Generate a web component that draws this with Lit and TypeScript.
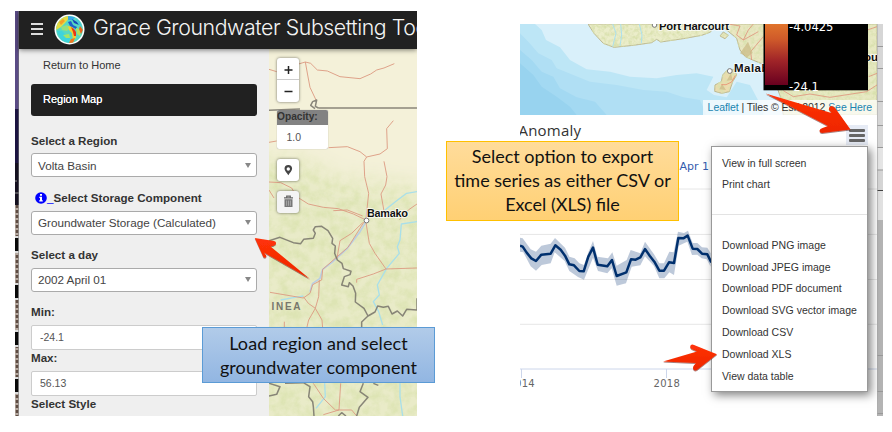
import { LitElement, html, svg, css } from "lit";
import { customElement, property } from "lit/decorators.js";

@customElement("grace-header")
class GraceHeader extends LitElement {
  static styles = css`
    :host { display: flex; align-items: center; height: 38px; background: #212121; color: #fff; overflow: hidden; position: relative; z-index: 2; box-shadow: 0 1px 5px rgba(0,0,0,.5); }
    .burger { flex: none; width: 12px; margin-left: 12px; display: grid; gap: 3px; margin-top: -2px; }
    .burger i { height: 2px; background: #ddd; }
    .logo { flex: none; width: 31px; height: 31px; margin-left: 11px; margin-top: -1px; }
    .title { font: 300 21.3px Inter, "Liberation Sans", sans-serif; white-space: nowrap; margin: -7px 0 0 8px; letter-spacing: -.42px; color: #f4f4f4; }
  `;
  render() {
    return html`
      <div class="burger"><i></i><i></i><i></i></div>
      <svg class="logo" viewBox="0 0 31 31">
        <defs>
          <clipPath id="disc"><circle cx="15.5" cy="15.5" r="13.4" /></clipPath>
          <filter id="soft"><feGaussianBlur stdDeviation=".6" /></filter>
        </defs>
        <circle cx="15.5" cy="15.5" r="15" fill="#fff" />
        <g clip-path="url(#disc)">
          <rect width="31" height="31" fill="#58d8c0" />
          <g filter="url(#soft)">
            <path d="M2 9L12 1L16 3L11 9L7 13L2 16Z" fill="#e2dc44" />
            <path d="M5 8L9 5L11 7L7 11Z" fill="#f5a028" />
            <path d="M14 2L21 3L19 6L14 6Z" fill="#38a8e8" />
            <path d="M14 8L17 7L19 11L23 13L22 15L16 12Z" fill="#1d60cc" />
            <path d="M18 5L23 8L25 11L20 9Z" fill="#1747b8" />
            <path d="M21 4L26 8L28 13L25 11Z" fill="#48c8d8" />
            <path d="M7 13L13 11L16 14L13 17L8 16Z" fill="#96e07c" />
            <path d="M14 12L18 13L21 17L22 24L19 26L18 19L15 16Z" fill="#f4d22c" />
            <path d="M17 13L20 15L22 18L22 22L20 22L19 18Z" fill="#e8341c" />
            <path d="M22 14L27 16L26 22L23 20Z" fill="#b8e05a" />
            <path d="M26 12L29 16L27 20L25 15Z" fill="#e8651e" />
            <path d="M3 17L8 17L12 21L16 24L15 29L7 26Z" fill="#3cd4dc" />
            <path d="M9 21L15 20L16 24L12 24Z" fill="#a4e468" />
            <path d="M17 25L21 24L19 29L15 29Z" fill="#ee7a24" />
          </g>
        </g>
      </svg>
      <div class="title">Grace Groundwater Subsetting Tool</div>
    `;
  }
}

@customElement("grace-sidebar")
class GraceSidebar extends LitElement {
  static styles = css`
    :host { display: flex; flex-direction: column; width: 226px; padding: 0 12px; background: #efefef; color: #333; font: 11px "Liberation Sans", Arial, sans-serif; overflow: hidden; flex: none; white-space: nowrap; }
    .nav { height: 32px; line-height: 32px; padding-left: 12px; flex: none; margin-bottom: 3px; }
    .active { background: #212121; color: #fff; border-radius: 3px; margin-bottom: 13px; line-height: 31px; text-shadow: 0 0 .6px #fff; }
    .label { flex: none; height: 24px; line-height: 21px; font-weight: bold; font-size: 11.6px; }
    .label.lead { line-height: 23px; }
    .label.tight { height: 21px; line-height: 15px; }
    .select { flex: none; box-sizing: border-box; height: 24px; border: 1px solid #aaa; border-radius: 3px; background: #fff; display: flex; align-items: center; justify-content: space-between; padding: 0 5px 0 6px; font-size: 11.7px; color: #444; margin-bottom: 9px; }
    .select.first { margin-bottom: 9.5px; padding-top: 1px; }
    .caret { border: 3px solid transparent; border-top: 5px solid #888; border-bottom: 0; }
    .input { flex: none; box-sizing: border-box; height: 25px; border: 1px solid #ccc; border-radius: 2px; background: #fff; line-height: 22px; padding-left: 8px; font-size: 10.5px; color: #555; }
    .info { display: inline-flex; width: 12px; height: 12px; margin-left: 4px; vertical-align: -2px; }
    .us { color: #00f; font-weight: normal; }
  `;
  render() {
    return html`
      <div class="nav">Return to Home</div>
      <div class="nav active">Region Map</div>
      <div class="label lead">Select a Region</div>
      <div class="select first">Volta Basin<span class="caret"></span></div>
      <div class="label"><svg class="info" viewBox="0 0 12 12"><circle cx="6" cy="6" r="5.8" fill="#0000fe" /><path d="M5 2H7V3.8H5ZM4.3 4.8H7V8.2H7.8V9.5H4.2V8.2H5V6H4.3Z" fill="#fff" /></svg><span class="us">_</span>Select Storage Component</div>
      <div class="select">Groundwater Storage (Calculated)<span class="caret"></span></div>
      <div class="label">Select a day</div>
      <div class="select">2002 April 01<span class="caret"></span></div>
      <div class="label">Min:</div>
      <div class="input">-24.1</div>
      <div class="label tight">Max:</div>
      <div class="input">56.13</div>
      <div class="label tight">Select Style</div>
    `;
  }
}

@customElement("region-map")
class RegionMap extends LitElement {
  static styles = css`
    :host { display: block; position: relative; flex: 1; overflow: hidden; font-family: "Liberation Sans", Arial, sans-serif; }
    .base { display: block; }
    .tools { position: absolute; left: 8px; top: 9px; display: flex; flex-direction: column; align-items: flex-start; }
    .box { width: 22px; background: #fff; border-radius: 3px; box-shadow: 0 0 3px rgba(0,0,0,.55); }
    .zoom { height: 44px; margin-bottom: 8px; }
    .zoom svg, .btn svg { display: block; }
    .opacity { width: 51px; height: 39px; margin-bottom: 10px; border-radius: 2px; background: #fff; overflow: hidden; color: #555; font-size: 10.5px; box-shadow: 0 0 1px #888; }
    .opacity b { display: block; height: 15px; line-height: 14px; background: #828282; color: #333; font-size: 10.2px; }
    .opacity span { display: block; padding-left: 9.5px; line-height: 24px; }
    .btn { height: 21.5px; margin-bottom: 10.5px; }
    .off { background: #f4f4f4; }
    .city { font: bold 11px "Liberation Sans", Arial, sans-serif; fill: #111; stroke: #fff; stroke-opacity: .7; stroke-width: 2; paint-order: stroke; }
    .country { font: bold 10px "Liberation Sans", Arial, sans-serif; fill: #77776c; }
  `;
  render() {
    return html`
      <svg class="base" width="148" height="367" viewBox="269 49 148 367">
        <defs>
          <filter id="terrain" x="0" y="0" width="100%" height="100%" color-interpolation-filters="sRGB">
            <feTurbulence type="fractalNoise" baseFrequency=".1" numOctaves="4" seed="8" />
            <feColorMatrix values="0 0 0 0 .84  0 0 0 0 .88  0 0 0 0 .66  2.4 0 0 0 -.8" />
          </filter>
          <filter id="blur"><feGaussianBlur stdDeviation="10" /></filter>
          <mask id="south"><path d="M225 160L300 156L340 178L460 190V450H225Z" fill="#fff" filter="url(#blur)" /></mask>
        </defs>
        <rect x="269" y="49" width="148" height="367" fill="#f4f1d9" />
        <g mask="url(#south)">
          <rect x="269" y="49" width="148" height="367" fill="#e9ebc8" />
          <rect x="269" y="49" width="148" height="367" filter="url(#terrain)" opacity=".6" />
        </g>
        <g transform="scale(.33333)" fill="none" stroke-linejoin="round">
          <g transform="translate(780 0)" stroke="#dd9c83" stroke-width="2.8">
            <path d="M27 208L50 215M116 192L136 186L152 190L172 210L202 213L240 230L300 236L332 222L350 210L372 204L403 191" />
            <path d="M136 186L143 225L150 262L168 300" />
            <path d="M400 362L380 386L382 446L360 462L320 471L300 455L262 440L206 443M27 427L50 423M320 471L312 484L314 530L326 580L318 656" />
            <path d="M372 484L381 530L377 555L363 582L375 650M27 546L62 548L95 564L110 590L145 612L190 622L235 626L280 642L318 660M27 570L42 594" />
            <path d="M471 612L445 630L418 660" />
            <path d="M471 575L440 580L410 602L375 630" stroke="#a9dfe9" stroke-width="4" />
          </g>
          <g transform="translate(780 630)">
            <path d="M471 35L424 42L420 90L412 110L418 130L380 175L352 225L358 255L340 275L356 305L368 345M62 270L105 262L130 258M420 520V560L428 618M194 520L196 560L168 595" stroke="#a9dfe9" stroke-width="4" />
            <path d="M320 32L300 65L262 115L215 158L188 178L180 205L158 220L150 245" stroke="#b9cfe4" stroke-width="5" />
            <path d="M308 38L275 70L240 92L231 145M318 38L328 100L345 130L378 177L471 174M378 177L340 192L290 208V218M220 2L262 0L308 18M312 36L264 112L188 178L185 210L158 224L150 250L130 264L30 247M130 260L145 280L166 295L176 260L178 210M166 295L146 330L140 355M166 295L186 330L188 355M73 335V355M160 520L190 565L226 600L275 600L290 618M242 520L237 600L190 614" stroke="#dd9c83" stroke-width="2.8" />
          </g>
          <g stroke="#77736a" stroke-width="4.5" stroke-opacity=".85">
            <path d="M807 331L900 327M955 324H1251M945 326L932 316L938 305L950 300L946 319L955 324" />
            <g transform="translate(780 630)">
              <path d="M27 92L60 82L100 98L122 101L131 88L160 85L166 70L160 60L166 50L185 49L204 62L218 85L216 100L226 108L224 130L232 150L246 160L250 176L273 184L270 194L253 200L245 225L265 230L268 218L279 228L287 250L286 276L312 295L324 318L345 306L353 288L370 292L385 289L396 312L412 303L428 318L440 298L471 300V265M324 318L305 336V352" />
              <path d="M27 520L60 530L50 553L27 558M75 520L130 518L150 530L146 560L158 575L160 590L162 618M310 520L300 545L324 562L298 592L290 618M340 520L355 526M235 618L245 608L258 618" />
            </g>
          </g>
        </g>
        <circle cx="366.5" cy="220.5" r="2.4" fill="#fff" stroke="#777" />
        <text class="city" x="367" y="216.5" textLength="41">Bamako</text>
        <text class="country" x="271.5" y="310" textLength="29">INEA</text>
      </svg>
      <div class="tools">
        <div class="box zoom"><svg width="22" height="44" viewBox="0 0 22 44"><path d="M7.5 12H15.5M11.5 8V16M7.5 33.5H15.5" stroke="#222" stroke-width="1.5" /><path d="M0 21.5H22" stroke="#ccc" /></svg></div>
        <div class="opacity"><b>Opacity:</b><span>1.0</span></div>
        <div class="box btn"><svg width="22" height="21" viewBox="0 0 22 21"><path d="M11.3 6A3.8 3.8 0 0 0 7.5 9.8C7.5 12 10 14 11.3 16.3C12.6 14 15.1 12 15.1 9.8A3.8 3.8 0 0 0 11.3 6ZM11.3 8.3A1.7 1.7 0 1 1 11.3 11.7A1.7 1.7 0 1 1 11.3 8.3Z" fill="#444" fill-rule="evenodd" /></svg></div>
        <div class="box btn off"><svg width="22" height="21" viewBox="0 0 22 21"><path d="M7 6.8H16M9.7 6.4V5.2H13.3V6.4" fill="none" stroke="#666" stroke-width="1.2" /><path d="M7.5 8.2H15.5V16H7.5Z" fill="#777" /><path d="M9.6 9.5V14.8M11.5 9.5V14.8M13.4 9.5V14.8" stroke="#bbb" stroke-width=".7" /></svg></div>
      </div>
    `;
  }
}

@customElement("coast-map")
class CoastMap extends LitElement {
  static styles = css`
    :host { display: block; position: relative; height: 91px; flex: none; font-family: "Liberation Sans", Arial, sans-serif; }
    .base { display: block; }
    .city { font: bold 11.5px "Liberation Sans", Arial, sans-serif; fill: #111; stroke: #fff; stroke-opacity: .7; stroke-width: 2; paint-order: stroke; }
    .legend { font: 11.5px "DejaVu Sans", sans-serif; fill: #fff; }
    .credit { position: absolute; right: 0; bottom: 0; height: 15px; line-height: 15px; padding: 0 5px; background: rgba(255,255,255,.72); font-size: 10.5px; white-space: nowrap; color: #333; letter-spacing: -.07px; }
    .link { color: #1a84b0; }
  `;
  render() {
    return html`
      <svg class="base" width="357" height="91" viewBox="520 24 357 91">
        <defs>
          <linearGradient id="heat" x1="0" y1="0" x2="0" y2="1"><stop offset="0" stop-color="#e0742c" /><stop offset=".25" stop-color="#cf5a2a" /><stop offset=".6" stop-color="#a02428" /><stop offset="1" stop-color="#68001f" /></linearGradient>
          <filter id="land" x="0" y="0" width="100%" height="100%" color-interpolation-filters="sRGB">
            <feTurbulence type="fractalNoise" baseFrequency=".09" numOctaves="3" seed="4" result="n" />
            <feColorMatrix in="n" values="0 0 0 0 .85  0 0 0 0 .88  0 0 0 0 .68  2.4 0 0 0 -.9" result="c" />
            <feComposite in="c" in2="SourceAlpha" operator="in" result="t" />
            <feMerge><feMergeNode in="SourceGraphic" /><feMergeNode in="t" /></feMerge>
          </filter>
        </defs>
        <rect x="520" y="24" width="357" height="91" fill="#d9f0fa" />
        <g transform="translate(510 10) scale(.33333)">
          <path d="M30 42H75L95 60L108 90L150 112L180 150L230 178L300 185L360 200L440 205L500 195L560 190L610 200L590 240L612 255L650 262L680 215L720 225L760 300V315H30Z" fill="#bde6f6" />
          <path d="M30 70L55 95L85 130L125 150L140 175L190 195L240 215L320 225L400 240L470 245L520 262L570 270L590 315H30Z" fill="#b0dff4" />
          <path d="M30 120L65 150L95 185L130 200L150 235L200 262L255 275L290 315H30Z" fill="#a3d9f2" />
          <path d="M30 160L70 195L95 230L140 260L180 290L200 315H30Z" fill="#98d3ef" />
          <g filter="url(#land)" stroke="#b9b48e" stroke-width="3">
            <path d="M234 42L252 70L280 100L312 112L370 106L425 98L440 88L452 96L520 86L575 76L602 66L608 42Z" fill="#ebedca" />
            <path d="M620 42L650 60L680 85L690 120L706 140L728 150L765 165V42Z" fill="#e9e7c2" />
            <path d="M640 66L630 78L645 86L655 76Z" fill="#e9e7c2" />
            <path d="M802 235L812 262L820 315H1101V42H1070V235Z" fill="#e7e9c2" />
            <path d="M650 182L672 178L680 195L668 215L658 245L635 250L614 244L615 225L634 215L638 195Z" fill="#ecdcae" />
          </g>
          <path d="M308 42L318 70L308 110M332 42L335 75L330 108M388 42L396 75L394 100" fill="none" stroke="#abe0ee" stroke-width="3" />
          <path d="M655 42L690 48L680 75L700 90L715 60L730 42M725 150L722 125L760 80M700 90L745 65" fill="none" stroke="#e0917b" stroke-width="2.4" />
          <path d="M690 130L714 95L728 128L712 142ZM650 212L663 190L668 210ZM628 238L636 222L648 240Z" fill="#c9b985" opacity=".7" />
          <path d="M634 224L648 224L665 216L676 196" fill="none" stroke="#e87c62" stroke-width="2" />
          <path d="M820 242L850 260L900 252L960 262L1070 245L1101 225M1072 60L1101 50M1076 200L1101 190" fill="none" stroke="#e0917b" stroke-width="2.4" />
        </g>
        <circle cx="654.5" cy="25" r="2.3" fill="#fff" stroke="#777" />
        <text class="city" x="659" y="29.5" textLength="70">Port Harcourt</text>
        <circle cx="729.8" cy="71" r="2.4" fill="#fff" stroke="#777" />
        <text class="city" x="734" y="71.5" textLength="42">Malabo</text>
        <text class="city" x="864" y="61">ou</text>
        <rect x="763.5" y="24" width="104.5" height="66.3" />
        <rect x="765" y="24" width="23" height="61" fill="url(#heat)" />
        <text class="legend" x="789" y="31">-4.0425</text>
        <text class="legend" x="789" y="90.5">-24.1</text>
      </svg>
      <div class="credit"><span class="link">Leaflet</span> | Tiles © Esri 2012 <span class="link">See Here</span></div>
    `;
  }
}

@customElement("anomaly-chart")
class AnomalyChart extends LitElement {
  static styles = css`
    :host { display: block; flex: 1; background: #fff; }
    .plot { display: block; }
    .title { font: 15px "Open Sans", sans-serif; fill: #333; letter-spacing: .2px; }
    .range { font: 11px "DejaVu Sans", sans-serif; fill: #335cad; }
    .tick { font: 10px "DejaVu Sans", sans-serif; fill: #666; letter-spacing: .3px; }
  `;
  render() {
    const grid = [189, 234.4, 279.5, 324.3];
    return html`
      <svg class="plot" width="357" height="301" viewBox="520 115 357 301">
        <text class="title" x="518.5" y="136">Anomaly</text>
        <text class="range" x="679.5" y="170">Apr 1</text>
        ${grid.map((y) => svg`<path d="M520 ${y}H877" stroke="#e6e6e6" />`)}
        <path d="M520 369H877M521.5 369V378M666.5 369V378" stroke="#ccd6eb" fill="none" />
        <text class="tick" x="515" y="386.5">014</text>
        <text class="tick" x="653.5" y="386.5">2018</text>
        <g transform="translate(510 215) scale(.33333)">
          <path d="M30 68L38 70L62 103L78 110L94 92L122 86L135 69L165 98L178 125L194 130L208 145L222 150L235 112L249 78L262 125L294 130L307 112L320 152L350 135L362 105L391 115L405 80L432 118L448 145L462 145L478 110L491 112L504 50L522 54L534 47L548 84L562 84L576 97L592 98L602 115V155L590 133L575 130L562 119L546 120L532 80L522 85L506 92L492 180L478 172L463 190L448 190L432 153L405 124L391 151L365 155L348 205L320 212L305 160L292 175L264 168L249 128L222 194L204 186L178 168L164 138L134 112L122 145L95 150L78 167L62 154L40 112L30 110Z" fill="#003070" fill-opacity=".26" />
          <path d="M30 92L38 95L50 113L64 130L78 138L94 119L122 116L136 91L152 104L165 122L178 148L192 151L208 168L221 169L235 125L249 98L263 149L292 154L306 135L320 183L349 172L363 133L377 134L391 127L405 102L419 122L433 140L448 167L462 167L477 142L492 144L505 69L520 70L533 62L548 101L562 102L576 116L592 118L604 142" fill="none" stroke="#00306e" stroke-width="7.5" stroke-linejoin="round" />
        </g>
      </svg>
    `;
  }
}

@customElement("export-menu")
class ExportMenu extends LitElement {
  static styles = css`
    :host { display: block; box-sizing: border-box; width: 157px; height: 246px; background: #fff; border: 1px solid #999; box-shadow: 3px 3px 9px rgba(0,0,0,.5); padding: 5.5px 10px; font: 10.5px "Liberation Sans", Arial, sans-serif; color: #333; white-space: nowrap; }
    .item { height: 21.85px; line-height: 21.85px; }
    .rule { border-top: 1px solid #e3e3e3; margin: 17.5px -10px 20px; }
  `;
  render() {
    const view = ["View in full screen", "Print chart"];
    const save = ["Download PNG image", "Download JPEG image", "Download PDF document", "Download SVG vector image", "Download CSV", "Download XLS", "View data table"];
    const item = (t: string) => html`<div class="item">${t}</div>`;
    return html`${view.map(item)}<div class="rule"></div>${save.map(item)}`;
  }
}

@customElement("call-out")
class CallOut extends LitElement {
  @property() tone = "blue";
  static styles = css`
    .note { box-sizing: border-box; width: 233px; text-align: center; font: 18px/24px Lato, Carlito, sans-serif; color: #111; white-space: nowrap; }
    .blue { height: 56px; padding-top: 3px; border: 1px solid #5b9bd5; background: linear-gradient(#b1cbe9, #92b6e2); letter-spacing: .1px; }
    .gold { height: 80px; padding-top: 2px; border: 1px solid #ffc000; background: linear-gradient(#ffdc9b, #ffd074); }
  `;
  render() {
    return html`<div class="note ${this.tone}"><slot></slot></div>`;
  }
}

@customElement("app-root")
class AppRoot extends LitElement {
  static styles = css`
    :host { display: flex; position: relative; box-sizing: border-box; width: 892px; height: 432px; padding: 11px 9px 16px 15px; background: #fff; overflow: hidden; justify-content: space-between; }
    .left { display: flex; width: 402px; height: 405px; overflow: hidden; }
    .edge { width: 4px; flex: none; }
    .app { flex: 1; min-width: 0; display: flex; flex-direction: column; }
    .body { flex: 1; display: flex; min-height: 0; }
    .right { display: flex; width: 363px; height: 392px; margin-top: 13px; overflow: hidden; position: relative; }
    .page { width: 357px; display: flex; flex-direction: column; }
    .gutter { flex: 1; }
    .menu { position: absolute; left: 191px; top: 122px; }
    .handle { position: absolute; left: 326px; top: 101px; width: 22px; height: 20px; background: #e6ebf5; display: grid; gap: 2px; align-content: center; justify-content: center; }
    .handle i { width: 16px; height: 3px; background: #666; border-radius: 1px; }
    .note-a { position: absolute; left: 202px; top: 327px; }
    .note-b { position: absolute; left: 446px; top: 141px; }
    .arrows { position: absolute; left: 0; top: 0; }
  `;
  render() {
    const tiles = [238, 285, 332, 379];
    return html`
      <div class="left">
        <svg class="edge" width="4" height="405" viewBox="15 11 4 405">
          <rect x="15" y="11" width="4" height="98" fill="#5a4b85" />
          <rect x="15" y="109" width="4" height="307" fill="#14101f" />
          <rect x="15" y="109" width="4" height="54" fill="#1b1440" />
          <path d="M15 181H17M15 193H19" stroke="#888" />
          <rect x="15" y="205" width="4" height="211" fill="#b7aaa1" />
          <path d="M17 205V416" stroke="#5e4c42" stroke-width="2.5" stroke-dasharray="3 2" />
          ${tiles.map((y) => svg`<rect x="15" y=${y - 2} width="4" height="17" fill="#ddd" /><rect x="15" y=${y} width="3.5" height="13" fill="#080808" />`)}
          <path d="M18.6 11V416" stroke="#777" stroke-width=".6" />
        </svg>
        <div class="app">
          <grace-header></grace-header>
          <div class="body"><grace-sidebar></grace-sidebar><region-map></region-map></div>
        </div>
      </div>
      <div class="right">
        <div class="page"><coast-map></coast-map><anomaly-chart></anomaly-chart></div>
        <svg class="gutter" width="6" height="392" viewBox="0 24 6 392">
          <rect y="24" width="6" height="196" fill="#d6d6d6" />
          <rect y="147" width="6" height="23" fill="#e6e6e6" />
          <rect y="190" width="6" height="30" fill="#e2e2e2" />
          <rect y="220" width="6" height="196" fill="#b4b4b4" />
          <path d="M0 46.5H6M0 68.5H6M0 101.5H6M0 125.5H6M0 147.5H6M0 170H6M0 355.5H6M0 391.5H6M0 413.5H6" stroke="#999" />
          <path d="M0 190.5H6" stroke="#444" />
          <path d="M.5 24V416" stroke="#aaa" stroke-opacity=".6" />
        </svg>
        <div class="handle"><i></i><i></i><i></i></div>
        <export-menu class="menu"></export-menu>
      </div>
      <call-out class="note-b" tone="gold">Select option to export<br />time series as either CSV or<br />Excel (XLS) file</call-out>
      <svg class="arrows" width="892" height="432" viewBox="0 0 892 432">
        <defs>
          <linearGradient id="red" x1="0" y1="0" x2="0" y2="1"><stop offset="0" stop-color="#ff3208" /><stop offset="1" stop-color="#ee2600" /></linearGradient>
          <filter id="drop" x="-10%" y="-10%" width="120%" height="130%"><feDropShadow dx="0" dy="1" stdDeviation=".6" flood-color="#400" flood-opacity=".5" /></filter>
        </defs>
        <g fill="url(#red)" filter="url(#drop)">
          <path d="M254.8 238L274 241Q277 242 275.5 244.5Q274 246 270.5 246.5L310 279L264 252.5L266.5 256Q266 258.5 263.5 257.3Z" />
          <path d="M765.5 93.5L831.5 113L829 109.5Q828.5 106.5 831.5 106Q834 106 835.5 108.5L850.5 129.5L822 133Q819.5 132.5 819.5 130.5Q820 128.5 822.5 128L828 126Z" />
          <path d="M663 361.5L697 351.5L691.5 349Q689.5 347.5 690.5 345.5Q692 344 694 345L717 354.2L697 370Q695 371 693.5 369.5Q692.5 368 693.5 366L696 363Z" />
        </g>
      </svg>
      <call-out class="note-a" tone="blue">Load region and select<br />groundwater component</call-out>
    `;
  }
}
